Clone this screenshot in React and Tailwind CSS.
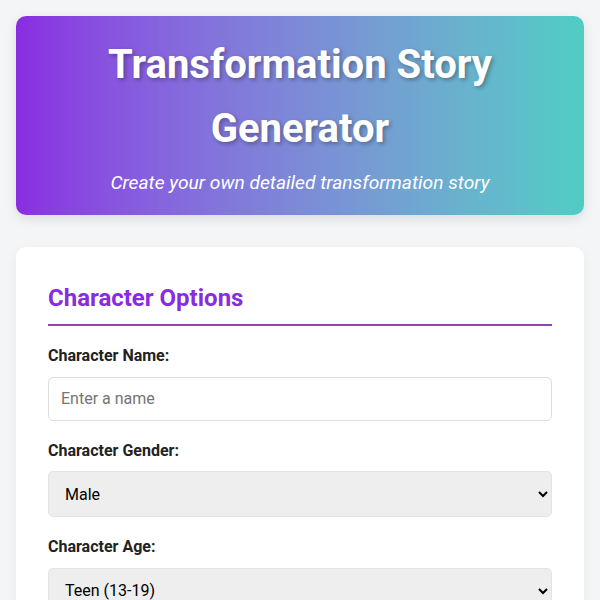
import React, { useState } from 'react';

const Field = ({ label, children }) => (
  <div className="mb-[17px]">
    <label className="block mb-2 font-bold text-[#222] text-base leading-[1.6]">{label}</label>
    {children}
  </div>
);

const App = () => {
  const [name, setName] = useState('');
  const [gender, setGender] = useState('male');
  const [age, setAge] = useState('teen');

  return (
    <div className="min-h-screen bg-[#f4f5f7] p-4 font-['Roboto',sans-serif] leading-[1.6]">
      <header className="rounded-[10px] bg-gradient-to-r from-[#8a2be2] to-[#4ecdc4] text-white text-center px-4 pt-[17px] pb-4 shadow-[0_4px_12px_rgba(0,0,0,0.1)]">
        <h1 className="text-[40px] font-bold leading-[1.6] mb-[7px] [text-shadow:2px_2px_4px_rgba(0,0,0,0.3)]">
          Transformation Story Generator
        </h1>
        <p className="text-[19.2px] italic leading-[1.6]">Create your own detailed transformation story</p>
      </header>

      <div className="mt-8 bg-white rounded-[10px] p-8 shadow-[0_4px_12px_rgba(0,0,0,0.06)]">
        <h2 className="text-2xl font-bold text-[#8a2be2] leading-[1.6] pb-[7px] border-b-2 border-[#8e44ad] mb-[17px]">
          Character Options
        </h2>

        <Field label="Character Name:">
          <input
            type="text"
            value={name}
            onChange={(e) => setName(e.target.value)}
            placeholder="Enter a name"
            className="w-full h-[44px] px-3 text-base border border-[#ddd] rounded-[5px] placeholder:text-[#757575] outline-none"
          />
        </Field>

        <Field label="Character Gender:">
          <select
            value={gender}
            onChange={(e) => setGender(e.target.value)}
            className="w-full h-[46px] px-3 text-base bg-[#eeeeee] border border-[#e3e3e3] rounded-[5px] text-black"
          >
            <option value="male">Male</option>
            <option value="female">Female</option>
            <option value="nonbinary">Non-binary</option>
          </select>
        </Field>

        <Field label="Character Age:">
          <select
            value={age}
            onChange={(e) => setAge(e.target.value)}
            className="w-full h-[46px] px-3 text-base bg-[#eeeeee] border border-[#e3e3e3] rounded-[5px] text-black"
          >
            <option value="child">Child (6-12)</option>
            <option value="teen">Teen (13-19)</option>
            <option value="adult">Adult (20-59)</option>
            <option value="elder">Elder (60+)</option>
          </select>
        </Field>
      </div>
    </div>
  );
};

export default App;
